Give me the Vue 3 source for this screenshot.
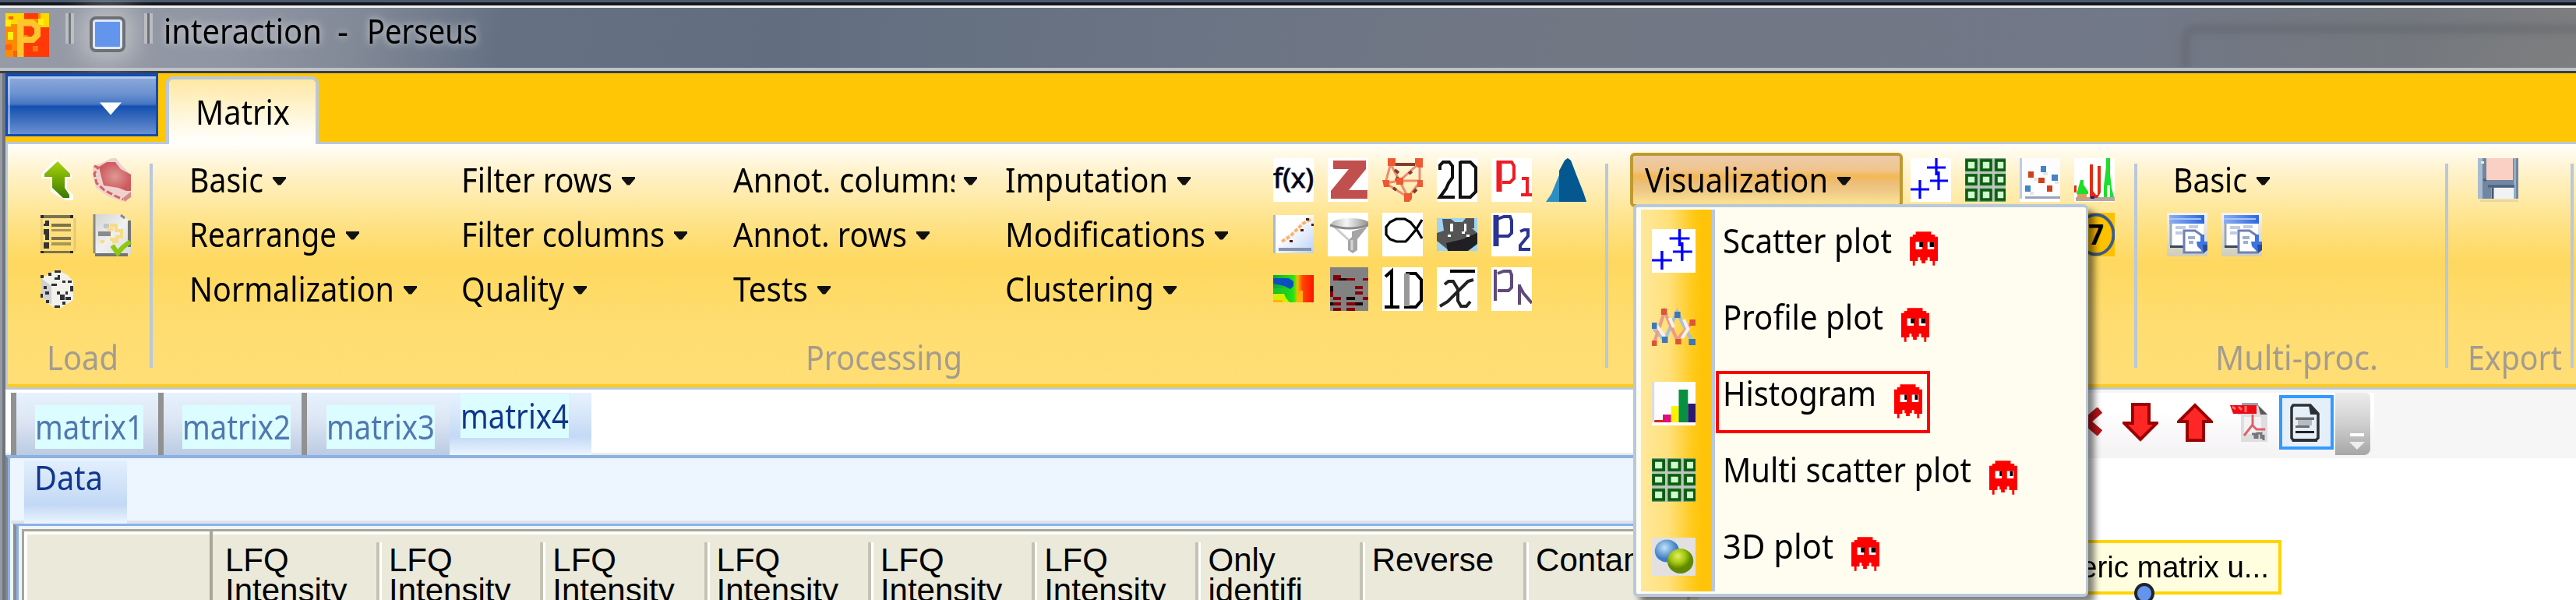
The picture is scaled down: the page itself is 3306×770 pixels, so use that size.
<script setup>
const vFit = {
  mounted(el, { value }) {
    const natural = el.getBoundingClientRect().width
    el.style.transform = `scaleX(${value / natural})`
    el.style.marginRight = `${value - natural}px`
  },
}

const menus = [
  [{ t: 'Basic', w: 95 }, { t: 'Rearrange', w: 189 }, { t: 'Normalization', w: 263 }],
  [{ t: 'Filter rows', w: 194 }, { t: 'Filter columns', w: 261 }, { t: 'Quality', w: 132 }],
  [{ t: 'Annot. columns', w: 297, clip: true }, { t: 'Annot. rows', w: 223 }, { t: 'Tests', w: 96 }],
  [{ t: 'Imputation', w: 209 }, { t: 'Modifications', w: 257 }, { t: 'Clustering', w: 191 }],
]
const loadIcons = ['up-green', 'brain', 'list', 'doc-check', 'dice']
const procIcons = [
  'fx', 'zscore', 'network', 'two-d', 'p1', 'density',
  'regress', 'funnel', 'fish', 'cat', 'p2', '',
  'heat', 'cluster', 'one-d', 'mean', 'pn', '',
]
const visIcons = ['scatter', 'multi', 'dots', 'bars']
const plots = [
  { t: 'Scatter plot', w: 217, icon: 'scatter', look: 1 },
  { t: 'Profile plot', w: 206, icon: 'profile', look: 1 },
  { t: 'Histogram', w: 197, icon: 'histogram', look: 0, marked: true },
  { t: 'Multi scatter plot', w: 319, icon: 'multi', look: 0 },
  { t: '3D plot', w: 142, icon: 'spheres', look: 1 },
]
const tabs = [
  { t: 'matrix1', cls: 'one' },
  { t: 'matrix2', cls: 'two' },
  { t: 'matrix3', cls: 'three' },
]
const columns = [
  'LFQ\nIntensity', 'LFQ\nIntensity', 'LFQ\nIntensity', 'LFQ\nIntensity',
  'LFQ\nIntensity', 'LFQ\nIntensity', 'Only\nidentifi', 'Reverse', 'Contam',
]
</script>

<template>
  <div class="window">
    <svg class="defs" width="0" height="0">
      <defs>
        <linearGradient id="gGreen" x1="0" y1="0" x2="0" y2="1"><stop offset="0" stop-color="#a8d40a" /><stop offset="1" stop-color="#3c7a00" /></linearGradient>
        <radialGradient id="gBrain"><stop offset="0" stop-color="#dc9a94" /><stop offset="1" stop-color="#ce5a5e" /></radialGradient>
        <linearGradient id="gPage" x1="0" y1="0" x2="1" y2="1"><stop offset="0" stop-color="#d2d2d2" /><stop offset=".5" stop-color="#f0f0f0" /><stop offset="1" stop-color="#d8dad8" /></linearGradient>
        <linearGradient id="gPlot" x1="0" y1="0" x2="1" y2="1"><stop offset=".4" stop-color="#fff" /><stop offset="1" stop-color="#b8d0f8" /></linearGradient>
        <linearGradient id="gHeat"><stop offset="0" stop-color="#10a040" /><stop offset=".5" stop-color="#20e810" /><stop offset=".6" stop-color="#f0c000" /><stop offset=".72" stop-color="#ff4800" /><stop offset="1" stop-color="#ff1000" /></linearGradient>
        <linearGradient id="gFunnel"><stop offset="0" stop-color="#b8b8b8" /><stop offset=".4" stop-color="#f6f6f6" /><stop offset="1" stop-color="#8c8c8c" /></linearGradient>
        <radialGradient id="gBlue" cx=".4" cy=".35"><stop offset="0" stop-color="#c0e4f8" /><stop offset="1" stop-color="#3c7cc4" /></radialGradient>
        <radialGradient id="gLime" cx=".4" cy=".3"><stop offset="0" stop-color="#e4f060" /><stop offset=".6" stop-color="#a0c410" /><stop offset="1" stop-color="#608800" /></radialGradient>
        <linearGradient id="gWin"><stop offset="0" stop-color="#8caef0" /><stop offset="1" stop-color="#2c68e0" /></linearGradient>
        <linearGradient id="gPaper" x1="0" y1="0" x2="0" y2="1"><stop offset="0" stop-color="#f4f4f0" /><stop offset="1" stop-color="#cfcdba" /></linearGradient>
      </defs>
      <symbol id="up-green" viewBox="0 0 52 56">
        <path d="M21 1 L40 21 V26 H34 V40 L42 47 V54 H32 L13 43 V26 H1 V20 L17 3Z" fill="#fff" />
        <path d="M22 4 L38 20 V24 H31 V38 L37 47 V51 H29 L15 38 V24 H5 V20Z" fill="url(#gGreen)" />
      </symbol>
      <symbol id="brain" viewBox="0 0 52 56">
        <path d="M0 10 L14 5 L24 0 H30 L36 8 L49 21 V50 L39 56 L20 49 L4 38 L0 22Z" fill="#efd2ce" />
        <path d="M8 11 L18 5 H29 L36 14 L49 21 V42 H43 L33 38 L14 35 L11 24Z" fill="url(#gBrain)" />
        <path d="M2 10 L7 12 L2 20 L5 32 L15 41 L28 48 L39 53" fill="none" stroke="#d4625f" stroke-width="3" stroke-dasharray="8 3" />
        <path d="M39 51 L49 43 V50 L41 56Z" fill="#d48a86" />
      </symbol>
      <symbol id="list" viewBox="0 0 52 56">
        <path d="M0 3H42V7H0Z M0 49H42V52H0Z" fill="#7c7250" />
        <path d="M0 3h4v4H0Z M38 3h4v4h-4Z M0 49h4v3H0Z M38 49h4v3h-4Z" fill="#2a2a2a" />
        <path d="M44 7V49 M1 8V48" stroke="#e6c878" stroke-width="3" />
        <path d="M14 14H39V18H14Z M14 31H39V35H14Z" fill="#7f714a" /><path d="M14 21H39V24H14Z M14 38H39V42H14Z" fill="#a8965a" />
        <path d="M4 14h2v-4h5v7H4Z M4 21h7v14h-5v-7H4Z M4 38h7v8H4Z" fill="#333" />
      </symbol>
      <symbol id="doc-check" viewBox="0 0 52 56">
        <path d="M1 2H37L49 12V52L44 56H3Z" fill="url(#gPage)" />
        <path d="M2 2V52 M36 3l5 4" stroke="#888" stroke-width="3" /><path d="M47 10V44 M3 54H45" stroke="#747474" stroke-width="4" />
        <path d="M7 24h16v6H7Z" fill="#8a8a8a" /><path d="M14 14h7v6h-7Z" fill="#c4c4c4" />
        <path d="M22 16h8v7h7v8h-6v6h-6 M10 37h5 M18 21h8 M22 34h10" fill="none" stroke="#f8dc82" stroke-width="4" />
        <path d="M25 42L32 52L38 45L48 37" fill="none" stroke="#8cc812" stroke-width="6" />
      </symbol>
      <symbol id="dice" viewBox="0 0 52 56">
        <path d="M21 3L35 10L42 18V42L26 52L14 50L1 38V14Z" fill="#f2f2ea" /><path d="M1 14L14 24V48L1 38Z" fill="#d0d0d0" />
        <path d="M18 4h8v3h-8Z M0 10h4v4H0Z M10 7h4v4h-4Z M22 10h3v6h-7v-3h4Z M14 21h7v3h-7Z M28 17h4v3h-4Z M35 17h5v3h-5Z M4 24h4v4H4Z M6 31h5v4H6Z M21 31h4v4h7v-4h3v4h-4v7h-6v-7h-4Z M38 24h4v7h-4Z M32 38h7v4h-7Z M0 34h3v5H0Z M7 42h4v4H7Z M18 49h7v3h-7Z M28 44h4v4h-4Z" fill="#30303a" />
      </symbol>
      <symbol id="zscore" viewBox="0 0 52 56">
        <rect width="52" height="56" fill="#fff" /><path d="M7 3H49V14L27 41H51V52H4V42L27 14H7Z" fill="#c0504d" />
      </symbol>
      <symbol id="network" viewBox="0 0 52 56">
        <path d="M11 8H48 M11 8L22 29L48 6V31L33 50L4 32L11 6 M22 29H48 M22 29L33 50 M4 32L22 29" stroke="#ed8c70" stroke-width="3" fill="none" />
        <path d="M14 8H42 M16 15l5 4 M34 20l4-3 M14 38l4 3 M40 44l4-4 M20 24l-2 5" stroke="#803e2e" stroke-width="4" />
        <path d="M7 0h10v10H7Z M42 0h10v12h-7l-3-5Z M0 28h9v9H2Z M18 25h9v9h-9Z M45 28h7v9h-7Z M28 45h10v7l-3 4h-7Z" fill="#ed5a31" />
      </symbol>
      <symbol id="two-d" viewBox="0 0 52 56">
        <rect width="52" height="56" fill="#fff" /><path d="M4 15V9L8 5H16L20 10V25L15 32L12 39L4 50V50H23 M30 4V50H43L50 43V12L43 5H30" fill="none" stroke="#111" stroke-width="4" />
      </symbol>
      <symbol id="one-d" viewBox="0 0 52 56">
        <rect width="52" height="56" fill="#fff" /><path d="M4 12L12 5V51 M3 51H22 M30 8H43L50 16V43L43 51H30V8" fill="none" stroke="#000" stroke-width="4" /><path d="M28 8H35V50H28Z" fill="#999" />
      </symbol>
      <symbol id="p1" viewBox="0 0 52 56">
        <rect width="52" height="56" fill="#fff" /><path d="M10 3V43" stroke="#ee1c25" stroke-width="7" /><path d="M10 5H26L29 10V26L24 31H14 M39 26H46V47 M38 47H52" fill="none" stroke="#ee1c25" stroke-width="4" />
      </symbol>
      <symbol id="p2" viewBox="0 0 52 56">
        <rect width="52" height="56" fill="#fff" /><path d="M6 3V43" stroke="#2b3490" stroke-width="7" /><path d="M8 8L16 5H24L26 10V26L22 30H8 M37 24L42 22H47V30L37 42V47H50" fill="none" stroke="#2b3490" stroke-width="4" />
      </symbol>
      <symbol id="pn" viewBox="0 0 52 56">
        <rect width="52" height="56" fill="#fff" /><path d="M5 3V43 M8 8L16 5H24L26 10V26L22 30H8 M36 22V48 M36 24L41 33L52 46" fill="none" stroke="#604a7b" stroke-width="4" />
      </symbol>
      <symbol id="density" viewBox="0 0 52 56">
        <path d="M0 56L7 46L16 24L24 3L28 0L32 3L40 24L48 44L52 56Z" fill="#2d8ec4" /><path d="M17 56V16L24 3L28 0L32 3L40 24L48 44L52 56Z" fill="#04588f" />
      </symbol>
      <symbol id="regress" viewBox="0 0 52 56">
        <rect y="3" width="52" height="49" fill="url(#gPlot)" /><path d="M0 3h3v49H0Z" fill="#a9b9d0" /><path d="M7 45H49V49H7Z" fill="#8496ae" />
        <path d="M11 37L22 30L38 14L49 8" stroke="#fcb36a" stroke-width="4" stroke-dasharray="5 2" fill="none" />
        <path d="M42 7h4v3h-4Z M49 14h3v3h-3Z M35 21h4v3h-4Z M21 35h4v3h-4Z" fill="#521c00" />
      </symbol>
      <symbol id="funnel" viewBox="0 0 52 56">
        <rect width="52" height="56" fill="#fff" /><path d="M4 14L28 36V48" fill="none" stroke="#ccc" stroke-width="3" /><ellipse cx="29" cy="14" rx="24" ry="7" fill="url(#gFunnel)" /><path d="M3 16Q28 24 52 16" stroke="#8b8b8b" stroke-width="3" fill="none" />
        <path d="M31 24L51 18L38 34V48L32 52L26 48V36L31 31Z" fill="#a5a5a5" /><path d="M31 35V48" stroke="#d5d5d5" stroke-width="3" />
      </symbol>
      <symbol id="fish" viewBox="0 0 52 56">
        <rect width="52" height="56" fill="#fff" /><path d="M51 9L43 22L33 34L30 37H18L10 34L5 28V18L10 12L18 8H29L36 12L45 23L51 33" stroke="#000" stroke-width="3.2" fill="none" />
      </symbol>
      <symbol id="cat" viewBox="0 0 52 56">
        <path d="M0 7H52V49H0Z" fill="#a0d4f2" /><path d="M7 8H18L23 12H33L37 7H48V20H45L52 26V38L38 49H16L0 36V26L9 23Z" fill="#555" /><path d="M12 39L33 34L52 26V40L40 49H14Z" fill="#202024" /><path d="M17 14h4v10h-4Z M35 14h3v10h-3Z M14 28h4v3h-4Z M32 24h4v3h-4Z M38 28h4v3h-4Z" fill="#fff" />
      </symbol>
      <symbol id="heat" viewBox="0 0 52 56">
        <rect y="10" width="52" height="35" fill="url(#gHeat)" /><path d="M0 14H20L26 18V24L22 28L14 24L0 21Z" fill="#0a4fc0" /><path d="M0 34H14L16 39L21 45H0Z" fill="#d4f000" /><path d="M0 27H18V33H0Z" fill="#20d020" opacity=".7" /><path d="M0 42H12V45H0Z M30 45L34 30H38V45Z" fill="#ffb400" />
      </symbol>
      <symbol id="cluster" viewBox="0 0 52 56">
        <path d="M3 0H52V56H3Z" fill="#828282" />
        <path d="M7 10H17V14H21V14H35V17H7Z M45 14H52V17H45Z M35 24H45V28H35Z M35 31H45V35H35Z M3 31H7V38H3Z M7 38H17V42H7Z M7 45H17V49H7Z M7 52H17V56H7Z M24 45H35V49H24Z M24 52H35V56H24Z M45 38H52V42H45Z" fill="#850008" />
        <path d="M3 24H7V31H3Z M3 45H7V49H3Z M14 14H24V17H14Z M24 38H35V42H24Z M35 45H45V49H35Z" fill="#160a08" />
      </symbol>
      <symbol id="mean" viewBox="0 0 52 56">
        <rect width="52" height="56" fill="#fff" /><path d="M17 3H49V7H17Z" /><path d="M10 22L15 18H21L27 28V43L31 50H38L43 44 M47 16L40 18L30 28L14 44L4 50" stroke="#222" stroke-width="4" fill="none" />
      </symbol>
      <symbol id="scatter" viewBox="0 0 52 56">
        <rect width="52" height="56" fill="#fff" /><path d="M33 0V22 M21 12H45 M36 17V41 M25 29H48 M12 28V52 M0 40H24" stroke="#0000fe" stroke-width="3.2" />
      </symbol>
      <symbol id="multi" viewBox="0 0 52 56">
        <rect width="52" height="56" fill="#75a078" /><path d="M0 18.5H52 M0 37H52 M17 0V56 M36 0V56" stroke="#bcc8be" stroke-width="3" />
        <path d="M2 3H14V15H2Z M21 3H33V15H21Z M40 3H51V15H40Z M2 22H14V33H2Z M21 22H33V33H21Z M40 22H51V33H40Z M2 41H14V53H2Z M21 41H33V53H21Z M40 41H51V53H40Z" fill="#cffccf" stroke="#0c5c10" stroke-width="3.5" />
      </symbol>
      <symbol id="dots" viewBox="0 0 52 56">
        <rect width="52" height="56" fill="#fdfdff" /><path d="M0 0h3v52H0Z" fill="#c0cce0" /><path d="M7 49H52V52H7Z" fill="#98a4bc" />
        <path d="M27 10h7v8h-7Z M41 21h8v8h-8Z M7 35h7v8H7Z" fill="#4484c2" /><path d="M11 17h7v8h-7Z M24 25h8v7h-8Z M35 35h7v8h-7Z" fill="#d04018" /><path d="M30 18h6v4h-6Z M18 25h5v4h-5Z M45 29h5v4h-5Z M13 43h5v4h-5Z" fill="#e6e6e8" />
      </symbol>
      <symbol id="bars" viewBox="0 0 52 56">
        <rect width="52" height="56" fill="#fff" /><path d="M2 50H52V55H2Z" fill="#b5a6a0" /><path d="M3 46L8 28H12V34L18 43V46Z M38 50V36L41 10V0H46V20L48 38L51 50H46V35H42V50Z" fill="#1be02a" />
        <path d="M20 8H24V42L28 47H30V10H34V44L30 51H20Z M0 35H3V44H0Z" fill="#e02c14" /><path d="M4 46H16V52H4Z" fill="#d8a060" /><path d="M21 49h5v3h-5Z" fill="#1020a0" />
      </symbol>
      <symbol id="profile" viewBox="0 0 52 56">
        <path d="M2 30L15 45L30 8L38 26L48 46" stroke="#a8c0dc" stroke-width="4" fill="none" /><path d="M3 47L15 8L30 44L49 20" stroke="#eb9c86" stroke-width="4" fill="none" /><path d="M6 26L15 40 M21 16L26 28 M38 18L43 30L36 42" stroke="#f8f0ea" stroke-width="4" fill="none" />
        <path d="M11 4h7v8h-7Z M0 45h6v7H0Z M28 43h7v7h-7Z M45 18h7v8h-7Z" fill="#da5636" /><path d="M27 8h7v8h-7Z M0 22h6v8H0Z M12 40h7v8h-7Z M44 43h8v8h-8Z" fill="#3c78b8" />
      </symbol>
      <symbol id="histogram" viewBox="0 0 52 56">
        <rect width="52" height="56" fill="#fdfdfd" /><path d="M0 0h3v52H0Z" fill="#dedede" /><path d="M3 49H13V52H3Z" fill="#d82818" /><path d="M13 42H23V52H13Z" fill="#de0e78" /><path d="M23 31H32V52H23Z" fill="#fff200" /><path d="M32 10H43V52H32Z" fill="#079040" /><path d="M43 28H52V52H43Z" fill="#2a1a72" />
      </symbol>
      <symbol id="spheres" viewBox="0 0 52 56">
        <rect y="4" width="52" height="49" fill="#e2e0e0" /><ellipse cx="18" cy="21" rx="14.500" ry="14.500" fill="url(#gBlue)" /><ellipse cx="34" cy="34" rx="15.500" ry="16" fill="url(#gLime)" />
      </symbol>
      <symbol id="win" viewBox="0 0 52 56">
        <rect width="52" height="56" fill="url(#gPaper)" /><path d="M3 3H48V14H3Z" fill="url(#gWin)" /><path d="M3 7H44V9H3Z" fill="#a8c4fa" /><path d="M4 14H47V43H4Z" fill="#fff" /><path d="M5 14V43" stroke="#98a8bc" stroke-width="3" /><path d="M4 43.5H22" stroke="#38485c" stroke-width="3" />
        <path d="M11 19H24 M11 26H20 M28 18H40" stroke="#c0cce0" stroke-width="4" /><path d="M22 23H36L46 30V51H22Z" fill="#fff" stroke="#7080b4" stroke-width="3" /><path d="M27 32H36 M28 38H34" stroke="#9cb0cc" stroke-width="4" />
        <path d="M38 37H43V28H48V37H52V43L46 50L39 43Z" fill="#3c74e0" /><path d="M46 41H52V48L47 52Z" fill="#2d4a94" />
      </symbol>
      <symbol id="save" viewBox="0 0 52 56">
        <path d="M0 0H52V52H3L0 49Z" fill="#7186a0" /><path d="M0 0H6V52H0Z" fill="#a8bccf" /><path d="M46 0H49V52H46Z" fill="#8fb0cc" /><path d="M11 0H45V28H11Z" fill="#fbd0c4" /><path d="M7 28H11 M13 36H47" stroke="#4c607c" stroke-width="3" /><path d="M17 38H46V52H17Z" fill="#f0f2f4" /><path d="M19 38V52" stroke="#42566e" stroke-width="3" /><path d="M4 4h4v3H4Z" fill="#f3ece0" /><path d="M3 53H52V56H3Z" fill="#e9d7a0" />
      </symbol>
      <symbol id="arrow-down" viewBox="0 0 46 50">
        <path d="M13 2H34V26H44L23 47L2 26H13Z" fill="#ff2626" stroke="#9c0000" stroke-width="4" />
      </symbol>
      <symbol id="pdf" viewBox="0 0 49 50">
        <path d="M10 3H36L48 14V50H14V16H10Z" fill="#dedede" /><path d="M15 0H36V4H15Z" fill="#94a4a8" /><path d="M36 3L48 15H39Z" fill="#5a5a5a" /><path d="M18 18H40V40H18Z" fill="#f2f2f4" /><path d="M29 15V28L18 42 M29 29L34 34H45" stroke="#e06068" stroke-width="3" fill="none" /><path d="M0 3H34V14H4Z" fill="#f00814" /><path d="M3 5l4 3 M11 5l4 4 M20 4v8" stroke="#ff7070" stroke-width="3" /><path d="M28 40H32V46 M35 46V39H40V46 M43 41V48" stroke="#75757c" stroke-width="3" fill="none" />
      </symbol>
      <symbol id="page" viewBox="0 0 38 50">
        <path d="M4 2H26L36 13V44L33 47H4L2 44V5Z" fill="#e5effa" stroke="#2c3034" stroke-width="3.5" /><path d="M24 2L37 14H26Z M3 45H35V49H3Z" fill="#2c3034" /><path d="M7 17.5H31V21H7Z M7 28H25V31H7Z" fill="#6c6e72" /><path d="M10 21H28V28H10Z" fill="#b6bcc4" /><path d="M7 35H31V38H7Z" fill="#222" />
      </symbol>
    </svg>

    <header class="titlebar">
      <div class="ghost-window"></div>
      <svg class="logo" viewBox="0 0 56 56">
        <rect width="56" height="56" fill="#ff8a00" /><path d="M0 0H24V14H0Z M45 0H56V18H45Z" fill="#ffd800" /><path d="M24 0H42V7H24Z M34 18H56V56H24V38Z" fill="#ff3a08" /><path d="M0 8h7v9H0Z M3 24h7v10H3Z M42 7h7v8h-7Z" fill="#ffee10" /><path d="M4 4h6v4H4Z M0 40h8v7H0Z M10 48h8v8h-8Z" fill="#ff6008" /><path d="M35 42h7v7h-7Z" fill="#ff7b10" /><path d="M19 56V12H34L41 18V28L35 34H20" fill="none" stroke="#ffc52c" stroke-width="8" /><path d="M24 17H34V28H24Z" fill="#ff3a08" />
      </svg>
      <i class="tick first"></i>
      <i class="blue-box"></i>
      <i class="tick"></i>
      <span v-fit="203" class="caption first">interaction</span>
      <span v-fit="14" class="caption dash">-</span>
      <span v-fit="142" class="caption app">Perseus</span>
    </header>

    <div class="frame">
      <div class="tabstrip">
        <div class="app-button"><svg width="30" height="20" viewBox="0 0 32 20"><path d="M1 2H31L16 19Z" fill="#fff" /></svg></div>
        <div class="ribbon-tab"><span v-fit="121">Matrix</span></div>
      </div>

      <div class="ribbon">
        <section class="group load">
          <div class="rows load-grid"><svg v-for="i in loadIcons" :key="i" class="icon"><use :href="'#' + i" /></svg></div>
          <div class="group-name"><span v-fit="92">Load</span></div>
        </section>
        <i class="rule"></i>
        <section class="group processing">
          <div class="rows proc">
            <div v-for="(col, c) in menus" :key="c" class="menu-col">
              <div v-for="m in col" :key="m.t" class="menu">
                <span :class="{ clipped: m.clip }"><span v-fit="m.w">{{ m.t }}</span></span><i class="caret"></i>
              </div>
            </div>
            <div class="icon-grid">
              <svg v-for="(i, n) in procIcons" :key="n" class="icon" viewBox="0 0 52 56">
                <template v-if="i === 'fx'"><rect width="52" height="56" fill="#fff" /><text x="0" y="38" font-size="35" textLength="52" lengthAdjust="spacingAndGlyphs" stroke="#15153c" stroke-width="1">f(x)</text></template>
                <use v-else-if="i" :href="'#' + i" />
              </svg>
            </div>
          </div>
          <div class="group-name"><span v-fit="201">Processing</span></div>
        </section>
        <i class="rule"></i>
        <section class="group vis">
          <div class="rows vis-row">
            <div class="vis-button"><span v-fit="235">Visualization</span><i class="caret"></i></div>
            <div class="vis-icons">
              <svg v-for="i in visIcons" :key="i" class="icon"><use :href="'#' + i" /></svg>
              <svg class="icon seven" viewBox="0 0 52 56">
                <rect width="52" height="56" fill="#ffc000" /><ellipse cx="28" cy="28" rx="22.500" ry="25.500" fill="none" stroke="#385d8a" stroke-width="4" /><text x="18" y="41" font-size="35" font-weight="bold">7</text>
              </svg>
            </div>
          </div>
        </section>
        <i class="rule"></i>
        <section class="group multi">
          <div class="rows multi-rows">
            <div class="menu"><span v-fit="95">Basic</span><i class="caret"></i></div>
            <div class="pair"><svg class="icon"><use href="#win" /></svg><svg class="icon"><use href="#win" /></svg></div>
          </div>
          <div class="group-name"><span v-fit="209">Multi-proc.</span></div>
        </section>
        <i class="rule"></i>
        <section class="group export">
          <div class="rows save"><svg class="icon"><use href="#save" /></svg></div>
          <div class="group-name"><span v-fit="121">Export</span></div>
        </section>
        <i class="rule"></i>
      </div>

      <div class="workspace">
        <div class="left">
          <div class="matrix-tabs">
            <div v-for="t in tabs" :key="t.t" class="mtab" :class="t.cls"><span class="chip"><span v-fit="139">{{ t.t }}</span></span></div>
            <div class="mtab active"><span class="chip"><span v-fit="139">matrix4</span></span></div>
          </div>
          <div class="panel">
            <div class="data-row"><div class="data-tab"><span v-fit="88">Data</span></div></div>
            <div class="sheet">
              <div class="grid-head">
                <div class="corner"></div>
                <div v-for="(c, n) in columns" :key="n" class="cell">{{ c }}</div>
              </div>
            </div>
          </div>
        </div>
        <div class="right">
          <div class="toolbar">
            <div class="tools">
              <svg class="cross" width="40" height="36" viewBox="0 0 40 36"><path d="M2 3L37 33M37 3L2 33" stroke="#b81418" stroke-width="10" /></svg>
              <svg class="tool" width="46" height="50"><use href="#arrow-down" /></svg>
              <svg class="tool flip" width="46" height="50"><use href="#arrow-down" /></svg>
              <svg class="pdf" width="49" height="50"><use href="#pdf" /></svg>
              <div class="selected"><svg width="38" height="50"><use href="#page" /></svg></div>
              <div class="overflow"><svg width="22" height="24" viewBox="0 0 22 24"><path d="M2 2H20V6H2Z" fill="#fff" /><path d="M1 13H21L11 23Z" fill="#eee" /></svg></div>
            </div>
          </div>
          <div class="canvas">
            <div class="node"><span v-fit="242">eric matrix u...</span><i class="pin"></i></div>
          </div>
        </div>
      </div>
    </div>

    <div class="popup">
      <div v-for="p in plots" :key="p.t" class="plot">
        <div class="plot-icon"><svg width="56" height="56" viewBox="0 0 52 56" preserveAspectRatio="none"><use :href="'#' + p.icon" /></svg></div>
        <span v-fit="p.w" class="plot-name">{{ p.t }}</span>
        <svg class="ghost" width="36" height="46" viewBox="0 0 38 46">
          <path d="M8 0H29V4H34V7H38V40H34V46H31V40H27V35H24V39H21V43H16V39H14V35H11V40H7V46H4V40H0V7H4V4H8Z" fill="#f00" />
          <path d="M8 14H17V24H8Z M24 14H33V24H24Z" fill="#fff" />
          <path :d="p.look ? 'M13 14H18V21H13Z M27 14H33V21H27Z' : 'M14 14H17V21H14Z M28 14H32V21H28Z'" />
        </svg>
        <i v-if="p.marked" class="mark"></i>
      </div>
    </div>
  </div>
</template>

<style>
html, body { margin: 0; overflow: hidden; }
</style>

<style scoped>
* { box-sizing: border-box; }
.window { position: relative; width: 3306px; height: 770px; overflow: hidden; background: #fff; font-family: "Noto Sans", "Open Sans", sans-serif; font-size: 43px; color: #000; white-space: nowrap; }
.window span { display: inline-block; transform-origin: 0 50%; }
.window i { display: block; flex: none; }
svg { display: block; flex: none; }
.defs { position: absolute; }
.icon { width: 52px; height: 56px; }

.titlebar { position: relative; display: flex; align-items: flex-start; height: 94px; padding: 17px 0 0 7px; overflow: hidden;
  background:
    linear-gradient(#4c5a70 0 3px, #15161a 3px 7px, #eef0f2 7px 10px, transparent 10px 87px, #bdc2c8 87px 91px, #3a3e44 91px),
    linear-gradient(100deg, #969ba7 0, #8f95a2 300px, #848b98 440px, #657183 640px, #626e80 1000px, #6c7584 1600px, #727784 2000px, #717887 2700px, #74787e 3050px, #7f7f7f 3306px); }
.ghost-window { position: absolute; left: 2800px; top: 32px; width: 560px; height: 55px; border: 10px solid rgba(90, 94, 100, .45); border-bottom: 0; border-radius: 18px 0 0 0; filter: blur(5px); clip-path: inset(-20px 0 0 -20px); }
.logo { width: 56px; height: 56px; }
.tick { width: 11px; height: 39px; margin-left: 24px; background: linear-gradient(90deg, #b9bcc1 0 4px, #6b6e73 4px 7px, #b9bcc1 7px); }
.tick.first { margin-left: 21px; }
.blue-box { width: 46px; height: 46px; margin: 4px 0 0 20px; border: 4px solid #6f7073; border-radius: 8px; background: #6495ed; box-shadow: inset 0 0 0 3px #dce8fc, 0 0 30px 12px rgba(215, 215, 215, .6); }
.caption { margin-top: -7px; line-height: 60px; text-shadow: 0 0 10px rgba(255, 255, 255, .5), 0 0 16px rgba(255, 255, 255, .35); }
.caption.first { margin-left: 14px; }
.caption.dash { margin-left: 20px; }
.caption.app { margin-left: 24px; }

.frame { position: relative; height: 676px; padding-left: 7px; background: linear-gradient(90deg, #959ba5 0 3px, #70757d 3px 7px, #fff 7px); }
.tabstrip { display: flex; height: 88px; background: #ffc605; }
.app-button { display: flex; width: 196px; height: 81px; padding: 31px 0 0 117px; border: 3px solid #114bb4; border-top-width: 4px; background: linear-gradient(#8eabdc 0, #6c92d0 30%, #4676c2 48%, #1450b0 52%, #2c62b8 65%, #6a90d0 100%); box-shadow: inset 3px 3px 0 rgba(220, 232, 250, .5); }
.ribbon-tab { position: relative; z-index: 1; width: 196px; height: 87px; margin: 4px 0 0 10px; padding: 5px 0 0 34px; border: 4px solid #b9c8da; border-bottom: 0; border-radius: 9px 9px 0 0; line-height: 73px; background: linear-gradient(#ffe8a4, #fff4d0 45%, #fffef8 90%); }
.ribbon { display: flex; height: 318px; border: 3px solid #b9c8da; border-right: 0; background: linear-gradient(#fffef9 0, #fff2cc 35px, #ffe9a2 75px, #fedf7b 115px, #fed85f 153px, #ffdd70 230px, #ffde76 308px, #fecb1e 308px); }
.group { display: flex; flex: none; flex-direction: column; padding-top: 11px; }
.rows { height: 233px; }
.rule { width: 4px; height: 262px; margin-top: 25px; background: #b9c8da; }
.group-name { line-height: 60px; color: #a49c8f; }
.load { width: 182px; }
.load-grid { display: grid; grid-template-columns: repeat(2, 67px); grid-auto-rows: 70px; padding: 7px 0 0 42px; }
.load .group-name { padding-left: 50px; }
.processing { width: 1864px; }
.proc { display: flex; padding-left: 47px; }
.menu-col { width: 349px; }
.menu { display: flex; align-items: center; height: 70px; line-height: 72px; }
.clipped { width: 284px; overflow: hidden; }
.caret { width: 17px; height: 11px; margin: 2px 0 0 12px; background: #111; clip-path: polygon(0 0, 100% 0, 100% 25%, 60% 100%, 40% 100%, 0 25%); }
.icon-grid { display: grid; grid-template-columns: repeat(6, 70px); grid-auto-rows: 70px; margin-left: -5px; padding-top: 7px; }
.processing .group-name { padding-left: 838px; }
.vis { width: 675px; }
.vis-row { display: flex; padding-left: 28px; }
.vis-button { display: flex; align-items: center; width: 350px; height: 70px; padding-left: 15px; border: 4px solid #bf9a30; border-radius: 6px; line-height: 64px; background: linear-gradient(#eccbab 0, #f0c48c 30%, #f4b852 42%, #ecbd78 55%, #f0cb88 75%, #fbe392 100%); }
.vis-icons { display: grid; grid-template-columns: repeat(4, 70px); grid-auto-rows: 70px; padding: 7px 0 0 10px; }
.seven { grid-column: 4; }
.multi { width: 395px; }
.multi-rows { padding-left: 46px; }
.pair { display: flex; gap: 18px; padding-top: 7px; margin-left: -8px; }
.multi .group-name { padding-left: 100px; }
.export { width: 157px; }
.save { padding: 7px 0 0 38px; }
.export .group-name { padding-left: 25px; }

.workspace { display: flex; height: 270px; }
.left { width: 2173px; }
.matrix-tabs { display: flex; height: 84px; padding: 4px 0 0 7px; background: linear-gradient(#fff 0 81px, #e9ebed 81px); }
.mtab { padding-top: 14px; border-left: 7px solid #919191; background: linear-gradient(#e6f2fe, #dfe7f5 40%, #bbcbe2); }
.one { width: 189px; padding-left: 24px; }
.two { width: 184px; padding-left: 24px; }
.three { width: 190px; padding-left: 25px; }
.mtab .chip { height: 56px; width: 139px; line-height: 55px; background: #dcfdff; color: #5078b0; }
.mtab.active { width: 182px; padding: 0 0 0 14px; border: 0; background: linear-gradient(#e6f2fe, #d5e5f9 40%, #c3d9f6 70%, #ecf5fe); }
.mtab.active .chip { color: #10378c; }
.panel { height: 186px; padding: 0 0 0 4px; border-left: 3px solid #83868a; border-top: 4px solid #8cb1e2; background: linear-gradient(90deg, #8cb1e2 0 3px, #edf5fe 3px); }
.data-row { height: 84px; padding: 3px 0 0 17px; background: linear-gradient(transparent 0 80px, #dde3eb 80px); }
.data-tab { width: 132px; height: 81px; padding-left: 13px; line-height: 44px; color: #10378c; background: linear-gradient(#e2effd, #cfe1f8 45%, #c2d8f5 70%, #edf6fe); }
.sheet { height: 98px; margin-left: 3px; padding: 4px 0 0 4px; border-left: 4px solid #8a8d90; border-top: 3px solid #8cb1e2; background: linear-gradient(90deg, #8cb1e2 0 3px, #edf5fe 3px); }
.grid-head { display: flex; height: 95px; margin-left: 3px; border-top: 3px solid #a9a697; border-left: 3px solid #a9a697; box-shadow: inset 4px 4px 0 #fff; background: #ebe9da; font: 42px/39px "Liberation Sans", Arial, sans-serif; overflow: hidden; }
.corner { flex: none; width: 242px; border-right: 4px solid #a9a697; }
.cell { flex: none; width: 210.3px; height: 80px; margin-top: 14px; padding: 3px 0 0 12px; border-right: 4px solid #c4c2b2; box-shadow: inset 3px 0 0 #fff; white-space: pre; }
.cell:nth-child(2) { width: 214px; padding-left: 16px; box-shadow: none; }
.right { width: 1126px; background: #fff; }
.toolbar { height: 88px; padding-top: 4px; background: #f6f6f6; }
.tools { display: flex; width: 867px; height: 84px; padding-left: 481px; background: linear-gradient(#fff 30%, #f8f6f8 70%, #f4f4f4); }
.cross { margin: 19px 0 0 -3px; }
.tool { margin: 13px 0 0 24px; }
.tool.flip { transform: scaleY(-1); }
.cross + .tool { margin-left: 26px; }
.pdf { margin: 13px 0 0 22px; }
.selected { flex: none; width: 70px; height: 70px; margin: 3px 0 0 14px; padding: 7px 0 0 10px; border: 4px solid #3399ff; background: #e5effa; }
.overflow { flex: none; width: 45px; height: 80px; margin-left: 2px; padding: 50px 0 0 17px; border-radius: 0 6px 8px 0; background: linear-gradient(#ececec, #cfcfcf 50%, #a6a6a6); }
.canvas { height: 182px; padding: 105px 0 0 460px; }
.node { position: relative; width: 288px; height: 70px; padding-left: 26px; border: 4px solid #ffd400; background: #ffffe0; font: 39px/61px "Liberation Sans", Arial, sans-serif; }
.pin { position: absolute; left: 95px; top: 51px; width: 26px; height: 27px; border: 4px solid #1f2530; border-radius: 50%; background: #6495ed; }

.popup { position: absolute; left: 2096px; top: 262px; width: 584px; height: 504px; padding: 3px 0 0 6px; border: 4px solid #b9c8da; border-right-width: 3px; border-radius: 6px; background: #fffdf0; box-shadow: 8px 8px 9px rgba(0, 0, 0, .5); }
.plot { position: relative; display: flex; align-items: flex-start; height: 98px; }
.plot-icon { flex: none; width: 95px; height: 98px; padding: 25px 0 0 14px; border-right: 4px solid #b9c8da; background: linear-gradient(90deg, #ffe89c 0, #ffe07a 40%, #ffc916 75%, #ffc40a 85%); }
.plot-name { margin-left: 10px; line-height: 79px; }
.ghost { margin: 27px 0 0 23px; }
.mark { position: absolute; left: 96px; top: 11px; width: 275px; height: 80px; border: 4px solid #fc0000; }
</style>
